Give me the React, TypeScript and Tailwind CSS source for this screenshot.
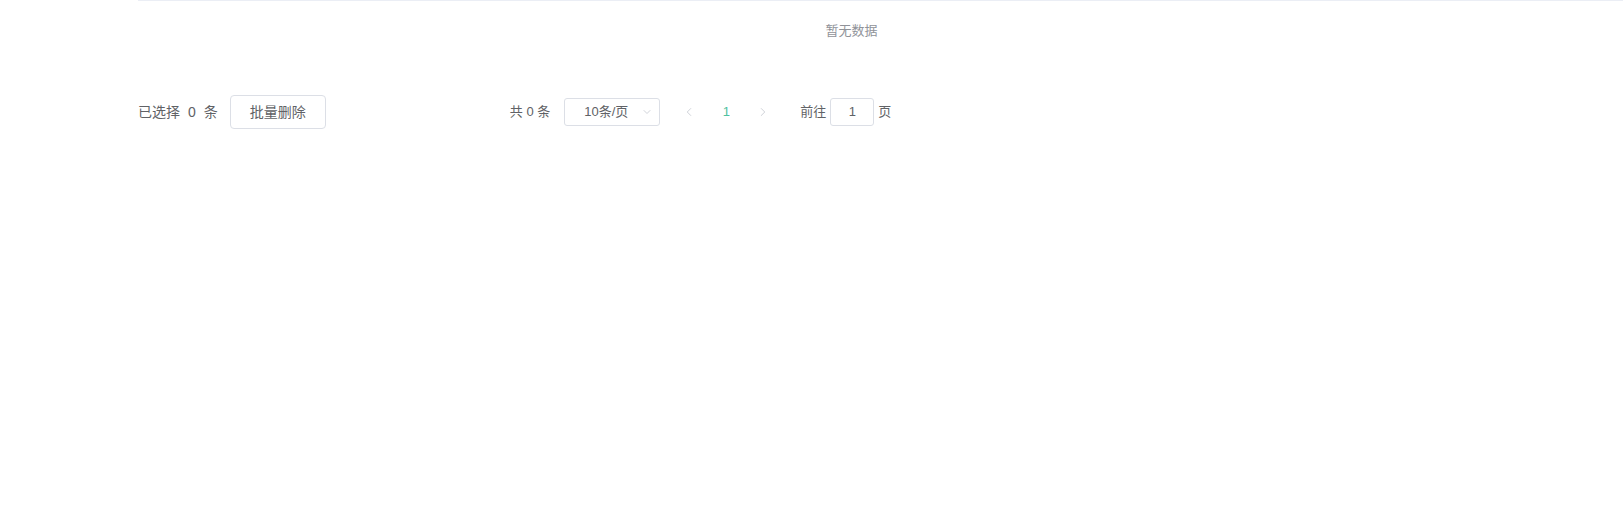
import { ChevronDown, ChevronLeft, ChevronRight } from "lucide-react";

const font = { fontFamily: '"Liberation Sans", "Noto Sans CJK SC", sans-serif' };

export default function App() {
  return (
    <div className="min-h-[521px] w-full bg-white pl-[138px]" style={font}>
      {/* Table empty state */}
      <div className="border-t border-[#ebeef5]">
        <div className="flex h-[60px] w-[1427px] items-center justify-center text-[13px] text-[#909399]">
          暂无数据
        </div>
      </div>

      {/* Footer */}
      <div className="mt-[34px] flex h-[34px] items-center text-[#606266]">
        <div className="flex items-center text-[14px]">
          <span>已选择</span>
          <span className="mx-[8px]">0</span>
          <span>条</span>
          <button
            className="ml-[12px] h-[34px] w-[96px] rounded-[4px] border border-[#dcdfe6] bg-white text-[14px] text-[#606266]"
            type="button"
          >
            批量删除
          </button>
        </div>

        <div className="ml-[184px] flex h-[28px] items-center text-[13px] text-[#606266]">
          <span className="mr-[14px]">共 0 条</span>
          <div className="flex h-[28px] w-[96px] items-center rounded-[3px] border border-[#dcdfe6] pl-[19px] pr-[6px]">
            <span className="flex-1">10条/页</span>
            <ChevronDown className="h-[12px] w-[12px] text-[#c0c4cc]" strokeWidth={1.5} />
          </div>
          <div className="ml-[20px] flex h-[28px] w-[18px] items-center justify-center text-[#c0c4cc]">
            <ChevronLeft className="h-[14px] w-[14px]" strokeWidth={1.3} />
          </div>
          <div className="mx-[10px] flex h-[28px] w-[36px] items-center justify-center text-[#4fc0a0]">
            1
          </div>
          <div className="flex h-[28px] w-[18px] items-center justify-center text-[#c0c4cc]">
            <ChevronRight className="h-[14px] w-[14px]" strokeWidth={1.3} />
          </div>
          <span className="ml-[28px]">前往</span>
          <div className="mx-[4px] flex h-[28px] w-[44px] items-center justify-center rounded-[3px] border border-[#dcdfe6]">
            1
          </div>
          <span>页</span>
        </div>
      </div>
    </div>
  );
}
